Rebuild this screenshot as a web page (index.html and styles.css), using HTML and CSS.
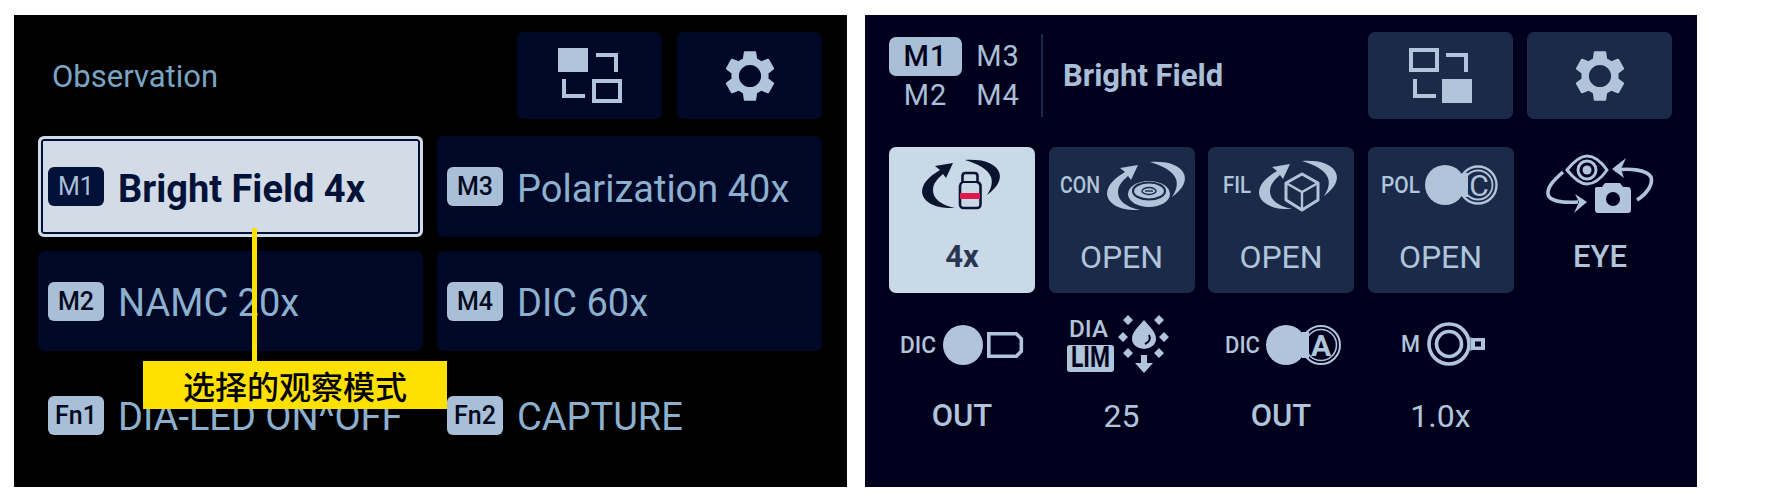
FILE: index.html
```html
<!DOCTYPE html>
<html lang="zh">
<head>
<meta charset="utf-8">
<title>Observation</title>
<link rel="stylesheet" href="styles.css">
</head>
<body>
<svg class="sprite" width="0" height="0" aria-hidden="true">
  <defs>
    <symbol id="gear" viewBox="0 0 24 24">
      <path d="M19.14 12.94c.04-.3.06-.61.06-.94 0-.32-.02-.64-.07-.94l2.03-1.58c.18-.14.23-.41.12-.61l-1.92-3.32c-.12-.22-.37-.29-.59-.22l-2.39.96c-.5-.38-1.03-.7-1.62-.94l-.36-2.54c-.04-.24-.24-.41-.48-.41h-3.84c-.24 0-.43.17-.47.41l-.36 2.54c-.59.24-1.13.57-1.62.94l-2.39-.96c-.22-.08-.47 0-.59.22L2.74 8.87c-.12.21-.08.47.12.61l2.03 1.58c-.05.3-.09.63-.09.94s.02.64.07.94l-2.03 1.58c-.18.14-.23.41-.12.61l1.92 3.32c.12.22.37.29.59.22l2.39-.96c.5.38 1.03.7 1.62.94l.36 2.54c.05.24.24.41.48.41h3.84c.24 0 .44-.17.47-.41l.36-2.54c.59-.24 1.13-.56 1.62-.94l2.39.96c.22.08.47 0 .59-.22l1.92-3.32c.12-.22.07-.47-.12-.61l-2.01-1.58zM12 16.300c-2.370 0-4.300-1.930-4.300-4.300s1.930-4.300 4.300-4.300 4.300 1.930 4.300 4.300-1.930 4.300-4.300 4.300z" fill="currentColor"/>
    </symbol>
    <symbol id="rotate" viewBox="0 0 146 80">
      <path d="M64 16 46 19l5 4C39 30 33 37 33 45c1 11 15 17 33 16-14-3-22-9-22-18 0-6 4-11 10-16l3 4z" fill="currentColor"/>
      <path d="M76 13c15-1 28 2 33 10 5 8 0 17-11 25 4-6 6-12 4-18-3-8-13-13-26-17z" fill="currentColor"/>
    </symbol>
  </defs>
</svg>

<main class="page">
  <section class="panel panel-dark">
    <header class="head">
      <h2 class="title">Observation</h2>
      <div class="tools">
        <button class="tool tool-navy" type="button">
          <svg class="tool-icon" viewBox="0 0 145 87" aria-hidden="true">
            <rect x="41" y="16" width="30" height="24" fill="currentColor"/>
            <path d="M79 23h20v17M47 47v17h21" fill="none" stroke="currentColor" stroke-width="4"/>
            <rect x="77" y="49" width="26" height="20" fill="none" stroke="currentColor" stroke-width="4"/>
          </svg>
        </button>
        <button class="tool tool-navy" type="button">
          <svg class="gear" aria-hidden="true"><use href="#gear"/></svg>
        </button>
      </div>
    </header>
    <div class="modes">
      <div class="mode mode-active"><span class="key key-dark">M1</span><span class="mode-name">Bright Field 4x</span></div>
      <div class="mode mode-fill"><span class="key">M3</span><span class="mode-name">Polarization 40x</span></div>
      <div class="mode mode-fill"><span class="key">M2</span><span class="mode-name">NAMC 20x</span></div>
      <div class="mode mode-fill"><span class="key">M4</span><span class="mode-name">DIC 60x</span></div>
      <div class="mode"><span class="key">Fn1</span><span class="mode-name">DIA-LED ON^OFF</span></div>
      <div class="mode"><span class="key">Fn2</span><span class="mode-name">CAPTURE</span></div>
    </div>
    <div class="callout-line"></div>
    <div class="callout">选择的观察模式</div>
  </section>

  <section class="panel panel-ink">
    <header class="head">
      <div class="status">
        <div class="slots">
          <span class="slot slot-on">M1</span><span class="slot">M3</span>
          <span class="slot">M2</span><span class="slot">M4</span>
        </div>
        <strong class="status-name">Bright Field</strong>
      </div>
      <div class="tools tools-tight">
        <button class="tool tool-slate" type="button">
          <svg class="tool-icon" viewBox="0 0 145 87" aria-hidden="true">
            <rect x="43" y="18" width="26" height="20" fill="none" stroke="currentColor" stroke-width="4"/>
            <path d="M78 23h20v17M47 47v17h21" fill="none" stroke="currentColor" stroke-width="4"/>
            <rect x="74" y="47" width="30" height="24" fill="currentColor"/>
          </svg>
        </button>
        <button class="tool tool-slate" type="button">
          <svg class="gear" aria-hidden="true"><use href="#gear"/></svg>
        </button>
      </div>
    </header>

    <div class="tiles">
      <div class="tile tile-on">
        <svg class="tile-icon" viewBox="0 0 146 80" aria-hidden="true">
          <use href="#rotate" width="146" height="80"/>
          <path d="M73.500 35v-6c0-2 1-3 3-3h9c2 0 3 1 3 3v6c2 1 3 2 3 4v18c0 3-1 4-4 4H75c-3 0-4-1-4-4V39c0-2 1-3 2.500-4z" fill="none" stroke="currentColor" stroke-width="2.600"/>
          <path d="M73 35h16" stroke="currentColor" stroke-width="2"/>
          <rect x="71" y="46" width="20" height="6" fill="#e0174a"/>
        </svg>
        <span class="tile-value tile-value-bold">4x</span>
      </div>

      <div class="tile tile-slate">
        <svg class="tile-icon" viewBox="0 0 146 80" aria-hidden="true">
          <text class="icon-label" x="11" y="46" textLength="40" lengthAdjust="spacingAndGlyphs">CON</text>
          <use href="#rotate" x="25" y="2" width="146" height="80"/>
          <ellipse cx="100" cy="47" rx="21" ry="13" fill="currentColor"/>
          <ellipse cx="100" cy="44" rx="16" ry="8.500" fill="none" stroke="#1c2a4a" stroke-width="2.200"/>
          <ellipse cx="100" cy="44" rx="7" ry="3.500" fill="none" stroke="#1c2a4a" stroke-width="1.400"/>
          <path d="M96 44h8" stroke="#1c2a4a" stroke-width="1.400"/>
        </svg>
        <span class="tile-value">OPEN</span>
      </div>

      <div class="tile tile-slate">
        <svg class="tile-icon" viewBox="0 0 146 80" aria-hidden="true">
          <text class="icon-label" x="15" y="46" textLength="28" lengthAdjust="spacingAndGlyphs">FIL</text>
          <use href="#rotate" x="18" y="1" width="146" height="80"/>
          <path d="M94 27l16 9v17l-16 10-16-10V36z" fill="#1c2a4a" stroke="currentColor" stroke-width="3" stroke-linejoin="round"/>
          <path d="M78 36l16 9 16-9M94 45v18" fill="none" stroke="currentColor" stroke-width="2.400"/>
        </svg>
        <span class="tile-value">OPEN</span>
      </div>

      <div class="tile tile-slate">
        <svg class="tile-icon" viewBox="0 0 146 80" aria-hidden="true">
          <text class="icon-label" x="13" y="46" textLength="39" lengthAdjust="spacingAndGlyphs">POL</text>
          <circle cx="110" cy="38" r="18.500" fill="none" stroke="currentColor" stroke-width="2.400"/>
          <circle cx="110" cy="38" r="14.500" fill="none" stroke="currentColor" stroke-width="1.800"/>
          <circle cx="77" cy="38" r="20" fill="currentColor"/>
          <path d="M94 26h6v24h-6z" fill="currentColor"/>
          <text class="icon-letter" x="111" y="49" text-anchor="middle">C</text>
        </svg>
        <span class="tile-value">OPEN</span>
      </div>

      <div class="tile tile-plain">
        <svg class="tile-icon" viewBox="0 0 146 80" aria-hidden="true">
          <path d="M40 23c8-10 14-14 20-14s13 4 20 14c-7 10-14 14-20 14s-12-4-20-14z" fill="none" stroke="currentColor" stroke-width="3"/>
          <circle cx="60" cy="23" r="9" fill="none" stroke="currentColor" stroke-width="3"/>
          <circle cx="60" cy="23" r="4.500" fill="currentColor"/>
          <path d="M68 41a3 3 0 0 1 3-1h4l3-4h15l3 4h5c2 0 3 2 3 4v19c0 2-1 3-3 3H71c-2 0-3-1-3-3z" fill="currentColor"/>
          <circle cx="86" cy="52" r="7" fill="#00001c"/>
          <path d="M36 25C27 33 20 40 21 47c1 7 14 9 30 8" fill="none" stroke="currentColor" stroke-width="3.600"/>
          <path d="M48 47l12 8-13 11 5-11z" fill="currentColor"/>
          <path d="M88 23c16-2 32 0 36 7 2 7-3 16-14 23" fill="none" stroke="currentColor" stroke-width="3.600"/>
          <path d="M99 11 85 22l12 9-3-9z" fill="currentColor"/>
        </svg>
        <span class="tile-value">EYE</span>
      </div>

      <div class="tile tile-plain">
        <svg class="tile-icon" viewBox="0 0 146 80" aria-hidden="true">
          <text class="icon-label" x="11" y="47" textLength="36" lengthAdjust="spacingAndGlyphs">DIC</text>
          <circle cx="74" cy="39" r="20" fill="currentColor"/>
          <path d="M99.800 27.800h27.500l5 5v12.400l-5 5H99.800z" fill="none" stroke="currentColor" stroke-width="3.600"/>
        </svg>
        <span class="tile-value">OUT</span>
      </div>

      <div class="tile">
        <svg class="tile-icon" viewBox="0 0 146 80" aria-hidden="true">
          <text class="icon-label" x="20" y="31" textLength="39" lengthAdjust="spacingAndGlyphs">DIA</text>
          <rect x="18" y="39" width="47" height="27" rx="3" fill="currentColor"/>
          <text class="icon-lim" x="41.500" y="61" text-anchor="middle" textLength="39" lengthAdjust="spacingAndGlyphs">LIM</text>
          <path d="M95 14c6 7 12 12 12 19a12 10 0 0 1-24 0c0-7 6-12 12-19z" fill="currentColor"/>
          <path d="M100 29c2 4 0 7-4 9" fill="none" stroke="#00001c" stroke-width="2"/>
          <path d="M79 9l5 5-5 5-5-5zM110 9l5 5-5 5-5-5zM74 26l5 5-5 5-5-5zM115 26l5 5-5 5-5-5zM79 42l5 5-5 5-5-5zM110 42l5 5-5 5-5-5z" fill="currentColor"/>
          <path d="M92 49h6v8h6l-9 10-9-10h6z" fill="currentColor"/>
        </svg>
        <span class="tile-value">25</span>
      </div>

      <div class="tile tile-plain">
        <svg class="tile-icon" viewBox="0 0 146 80" aria-hidden="true">
          <text class="icon-label" x="17" y="47" textLength="35" lengthAdjust="spacingAndGlyphs">DIC</text>
          <circle cx="113" cy="39" r="19" fill="none" stroke="currentColor" stroke-width="2"/>
          <circle cx="113" cy="39" r="15.500" fill="none" stroke="currentColor" stroke-width="1.600"/>
          <circle cx="78" cy="39" r="20" fill="currentColor"/>
          <path d="M94 26h7v26h-7z" fill="currentColor"/>
          <text class="icon-letter icon-letter-bold" x="113" y="50" text-anchor="middle">A</text>
        </svg>
        <span class="tile-value">OUT</span>
      </div>

      <div class="tile">
        <svg class="tile-icon" viewBox="0 0 146 80" aria-hidden="true">
          <text class="icon-label" x="33" y="46" textLength="19" lengthAdjust="spacingAndGlyphs">M</text>
          <path d="M99 30l5 2h13v12h-13l-5 2z" fill="currentColor"/>
          <rect x="107" y="35.500" width="6" height="5" fill="#00001c"/>
          <circle cx="81" cy="38" r="22" fill="#00001c"/>
          <circle cx="81" cy="38" r="20" fill="none" stroke="currentColor" stroke-width="3.600"/>
          <circle cx="81" cy="38" r="12.500" fill="none" stroke="currentColor" stroke-width="3.600"/>
        </svg>
        <span class="tile-value">1.0x</span>
      </div>
    </div>
  </section>
</main>
</body>
</html>
```
FILE: styles.css
```css
* { box-sizing: border-box; }

html, body {
  margin: 0;
  background: #fff;
}

.sprite { position: absolute; }

.page {
  display: flex;
  gap: 18px;
  padding: 15px 0 16px 14px;
  font-family: Roboto, "Noto Sans", sans-serif;
}

.panel {
  position: relative;
  width: 832px;
  height: 472px;
  padding: 17px 25px 0 24px;
}

.panel-dark { background: #000; width: 833px; }
.panel-ink { background: #00001c; }

.head {
  display: flex;
  justify-content: space-between;
  align-items: center;
  height: 87px;
}

.title {
  margin: 2px 0 0 14px;
  font-size: 31px;
  font-weight: 400;
  color: #7aa5c4;
}

.tools { display: flex; gap: 15px; }
.tools-tight { gap: 14px; }

.tool {
  display: flex;
  align-items: center;
  justify-content: center;
  width: 145px;
  height: 87px;
  padding: 0;
  border: 0;
  border-radius: 7px;
  color: #b0c4da;
}

.tool-navy { background: #000828; }
.tool-slate { background: #1c2a4a; }

.tool-icon { display: block; width: 145px; height: 87px; }
.gear { display: block; width: 62px; height: 62px; }

.modes {
  display: grid;
  grid-template-columns: 385px 385px;
  grid-template-rows: 101px 100px 100px;
  column-gap: 14px;
  row-gap: 14px;
  margin-top: 17px;
}

.mode {
  display: flex;
  align-items: center;
  gap: 14px;
  padding-left: 10px;
  border-radius: 7px;
  color: #8db0cf;
  font-size: 38px;
  white-space: nowrap;
}

.mode-name { padding-top: 4px; }

.mode-fill { background: #000828; }

.mode-active {
  padding-left: 7px;
  background: #d3dbe7;
  border: 3px solid #d3dbe7;
  border-radius: 6px;
  box-shadow: inset 0 0 0 2px #001238;
  color: #001238;
  font-weight: 700;
}

.key {
  display: flex;
  align-items: center;
  justify-content: center;
  flex: none;
  width: 56px;
  height: 39px;
  border-radius: 6px;
  background: #a9bfd8;
  color: #000a20;
  font-size: 25px;
  font-weight: 500;
}

.key-dark {
  background: #001238;
  color: #a9bfd8;
  font-weight: 400;
}

.callout-line {
  position: absolute;
  left: 238px;
  top: 213px;
  width: 5px;
  height: 133px;
  background: #ffe100;
}

.callout {
  position: absolute;
  left: 129px;
  top: 346px;
  width: 304px;
  height: 48px;
  padding-left: 40px;
  background: #ffe100;
  color: #000;
  font-family: "Noto Sans CJK SC", sans-serif;
  font-size: 32px;
  font-weight: 500;
  line-height: 48px;
}

.status {
  display: flex;
  align-items: center;
  align-self: stretch;
}

.slots {
  display: grid;
  grid-template-columns: 73px 72px;
  grid-auto-rows: 39px;
  padding-right: 7px;
  border-right: 2px solid #1c2a4a;
  height: 83px;
  align-content: center;
}

.slot {
  display: flex;
  align-items: center;
  justify-content: center;
  font-size: 29px;
  letter-spacing: 1px;
  color: #a9bfd8;
}

.slot-on {
  border-radius: 7px;
  background: #a9bfd8;
  color: #00001c;
  font-weight: 500;
}

.status-name {
  margin-left: 20px;
  font-size: 31px;
  font-weight: 700;
  color: #a9bfd8;
}

.tiles {
  display: grid;
  grid-template-columns: repeat(5, 1fr);
  grid-auto-rows: 146px;
  column-gap: 13.500px;
  row-gap: 13px;
  margin-top: 28px;
}

.tile {
  display: flex;
  flex-direction: column;
  align-items: center;
  border-radius: 7px;
  color: #b0c4da;
}

.tile-slate { background: #1c2a4a; }

.tile-on {
  background: #c9d9e8;
  color: #0a1430;
}

.tile-icon {
  display: block;
  width: 146px;
  height: 80px;
}

.tile-value {
  padding-top: 2px;
  font-size: 32px;
  font-weight: 400;
  line-height: 56px;
}

.tile-plain .tile-value {
  font-size: 31px;
  font-weight: 500;
}

.tile-value-bold {
  font-size: 31px;
  font-weight: 700;
  color: #2a3650;
}

.icon-label {
  font-family: Roboto, sans-serif;
  font-size: 23px;
  font-weight: 500;
  fill: currentColor;
}

.icon-lim {
  font-family: Roboto, sans-serif;
  font-size: 29px;
  font-weight: 700;
  fill: #00001c;
}

.icon-letter {
  font-family: Roboto, sans-serif;
  font-size: 30px;
  fill: currentColor;
}

.icon-letter-bold { font-weight: 700; }
```
